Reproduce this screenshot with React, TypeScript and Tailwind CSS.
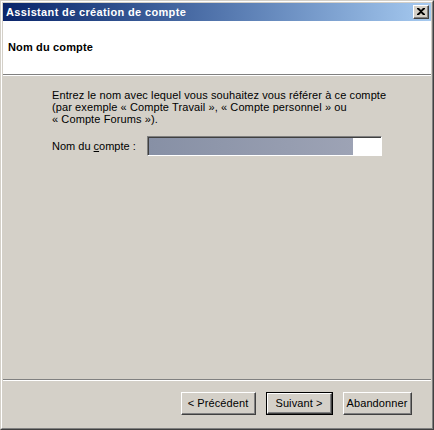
import React from 'react';

const font = { fontFamily: '"Liberation Sans", Arial, sans-serif' };

function ClassicButton({ label, isDefault, className = '' }: { label: React.ReactNode; isDefault?: boolean; className?: string }) {
  return (
    <div className={`h-[23px] ${isDefault ? 'border border-black' : ''} ${className}`}>
      <div className="h-full border-t border-l border-t-white border-l-white border-b border-r border-b-[#404040] border-r-[#404040]">
        <div className="h-full flex items-center justify-center border-b border-r border-b-[#808080] border-r-[#808080] bg-[#d4d0c8] text-[11px] tracking-[0.1px] text-black">
          {label}
        </div>
      </div>
    </div>
  );
}

export default function App() {
  return (
    <div className="w-[434px] h-[430px] bg-[#d4d0c8]" style={font}>
      {/* window frame */}
      <div className="w-full h-full border border-t-[#d4d0c8] border-l-[#d4d0c8] border-b-[#404040] border-r-[#404040]">
        <div className="w-full h-full border border-t-white border-l-white border-b-[#808080] border-r-[#808080] p-px flex flex-col">
          {/* title bar */}
          <div className="h-[18px] flex items-center justify-between pl-[3px] pr-[2px] bg-gradient-to-r from-[#0a246a] to-[#a6caf0]">
            <span className="text-[11px] font-bold tracking-[0.35px] text-white leading-none">Assistant de création de compte</span>
            <div className="w-[16px] h-[14px] border-t border-l border-t-white border-l-white border-b border-r border-b-[#404040] border-r-[#404040]">
              <div className="w-full h-full flex items-center justify-center border-b border-r border-b-[#808080] border-r-[#808080] bg-[#d4d0c8]">
                <svg width="8" height="7" viewBox="0 0 8 7">
                  <path d="M0 0h2l2 2 2-2h2v1L5 3.5 8 6v1H6L4 5 2 7H0V6l3-2.5L0 1z" fill="#000" />
                </svg>
              </div>
            </div>
          </div>

          {/* header */}
          <div className="h-[54px] bg-white border-b border-b-[#808080]">
            <div className="h-[52px] flex items-center pl-[5px] text-[11px] font-bold tracking-[0.15px] text-black">Nom du compte</div>
          </div>
          <div className="h-px bg-white" />

          {/* body */}
          <div className="flex-1 pt-[13px] pl-[49px] text-[11px] tracking-[0.1px] text-black">
            <p className="leading-[12px]">
              Entrez le nom avec lequel vous souhaitez vous référer à ce compte
              <br />
              (par exemple « Compte Travail », « Compte personnel » ou
              <br />
              « Compte Forums »).
            </p>
            <div className="mt-[11px] flex items-center">
              <span className="w-[95px] tracking-normal">
                Nom du <span className="underline">c</span>ompte :
              </span>
              <div className="w-[235px] h-[20px] border-t border-l border-t-[#808080] border-l-[#808080] border-b border-r border-b-white border-r-white">
                <div className="h-full border-t border-l border-t-[#404040] border-l-[#404040] bg-white flex">
                  <div className="w-[204px] h-full bg-gradient-to-r from-[#8790a5] to-[#9da3b5]" />
                </div>
              </div>
            </div>
          </div>

          {/* bottom separator */}
          <div className="h-px bg-[#808080]" />
          <div className="h-px bg-white" />

          {/* buttons */}
          <div className="h-[46px] pt-[11px] pr-[19px] flex justify-end items-start">
            <ClassicButton label="< Précédent" className="w-[75px]" />
            <ClassicButton label="Suivant >" isDefault className="w-[67px] ml-[10px]" />
            <ClassicButton label="Abandonner" className="w-[69px] ml-[10px]" />
          </div>
        </div>
      </div>
    </div>
  );
}
